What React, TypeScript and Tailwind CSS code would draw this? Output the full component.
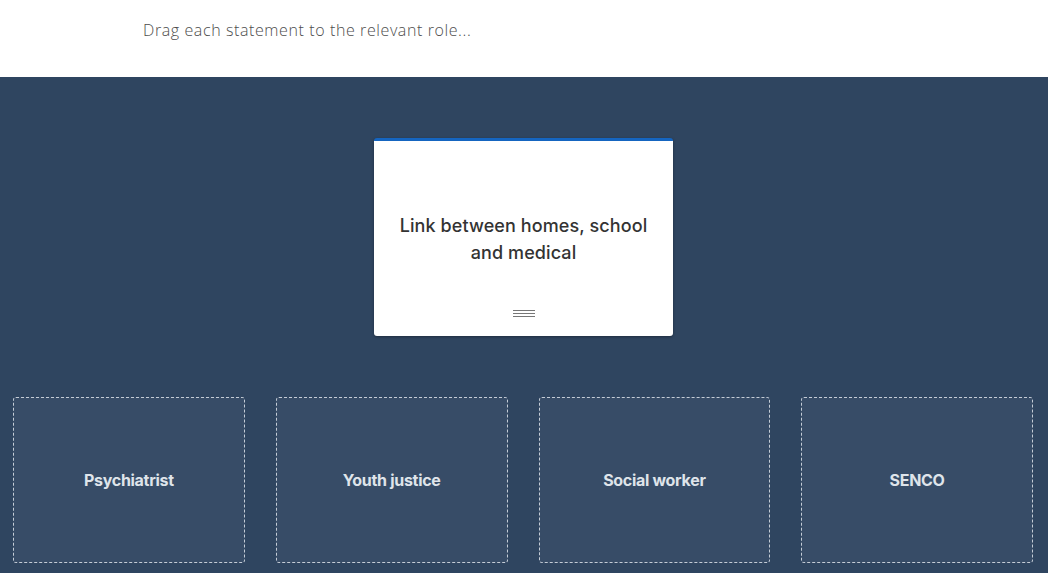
export default function App() {
  const roles = ["Psychiatrist", "Youth justice", "Social worker", "SENCO"];

  return (
    <div className="min-h-[573px] flex flex-col bg-[#2f4560]" style={{ fontFamily: "'Open Sans', sans-serif" }}>
      <div className="h-[77px] bg-white pl-[143px] pt-[18px]">
        <p className="text-[16px] font-light text-[#4d4d4d] tracking-[0.6px]" style={{ fontFamily: "'Open Sans', sans-serif" }}>Drag each statement to the relevant role...</p>
      </div>

      <div className="flex-1 flex flex-col pt-[61px]">
        <div className="flex justify-center">
          <div className="w-[299px] h-[198px] bg-white border-t-[3px] border-[#1565c0] rounded-[3px] shadow-[0_1px_3px_rgba(0,0,0,0.35)] flex flex-col ml-[-1px]">
            <div className="flex-1 flex items-center justify-center px-5 pt-[26px]">
              <p className="text-center text-[18px] leading-[27px] font-medium text-[#333] tracking-[0.1px]" style={{ fontFamily: "Inter, 'Open Sans', sans-serif" }}>
                Link between homes, school and medical
              </p>
            </div>
            <div className="flex justify-center mb-[19px]">
              <div className="w-[22px] flex flex-col gap-[2px]">
                <div className="h-px bg-[#777]" />
                <div className="h-px bg-[#777]" />
                <div className="h-px bg-[#777]" />
              </div>
            </div>
          </div>
        </div>

        <div className="grid grid-cols-4 gap-[31px] pl-[13px] pr-[15px] mt-[61px]">
          {roles.map((r) => (
            <div key={r} className="h-[166px] bg-[#374c67] border border-dashed border-[#c4ccd6] rounded-[3px] flex items-center justify-center">
              <span className="text-[16px] font-bold text-[#dfe4ea] tracking-[-0.3px]" style={{ fontFamily: "Inter, 'Open Sans', sans-serif" }}>{r}</span>
            </div>
          ))}
        </div>
      </div>
    </div>
  );
}
